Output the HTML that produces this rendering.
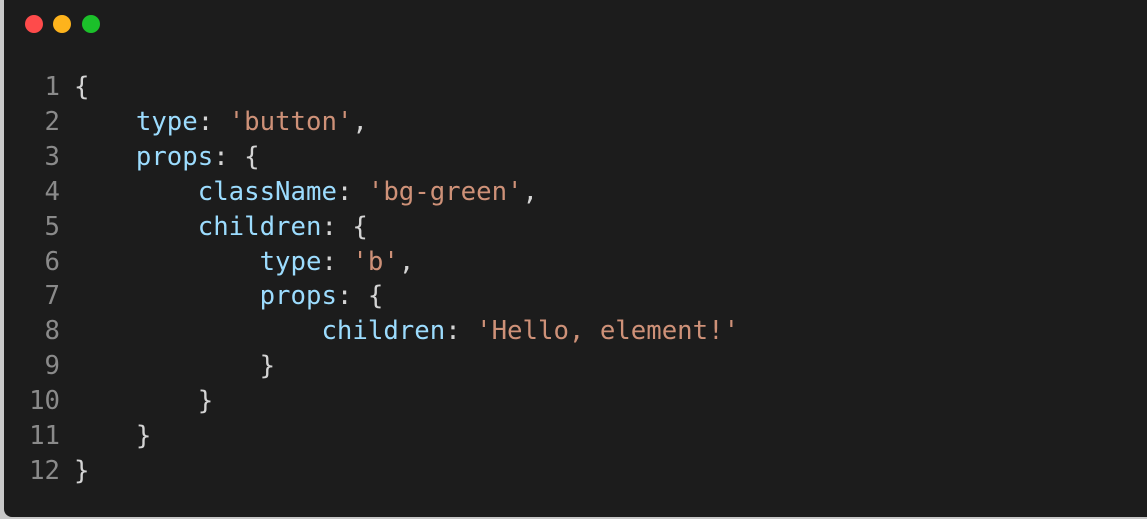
<!DOCTYPE html><html><head><style>
body{margin:0;width:1147px;height:519px;background:#c8c8c8;overflow:hidden;position:relative}
.win{position:absolute;left:4px;top:0;width:1143px;height:517px;background:#1c1c1c;border-bottom-left-radius:8px}
.d{position:absolute;top:15px;width:18px;height:18px;border-radius:50%}
pre{position:absolute;left:0;top:70px;margin:0;font-family:"DejaVu Sans Mono","Liberation Mono",monospace;font-size:25.7px;line-height:34.9px;color:#d4d4d4}
.n{color:#8a8a8a;display:inline-block;width:56px;text-align:right;margin-right:14px}
.k{color:#9cdcfe}.s{color:#ce9178}
</style></head><body><div class="win">
<div class="d" style="left:21px;background:#fe4b4b"></div>
<div class="d" style="left:49px;background:#fdb31c"></div>
<div class="d" style="left:78px;background:#1bc02a"></div>
<pre><span class="n">1</span>{
<span class="n">2</span>    <span class="k">type</span>: <span class="s">'button'</span>,
<span class="n">3</span>    <span class="k">props</span>: {
<span class="n">4</span>        <span class="k">className</span>: <span class="s">'bg-green'</span>,
<span class="n">5</span>        <span class="k">children</span>: {
<span class="n">6</span>            <span class="k">type</span>: <span class="s">'b'</span>,
<span class="n">7</span>            <span class="k">props</span>: {
<span class="n">8</span>                <span class="k">children</span>: <span class="s">'Hello, element!'</span>
<span class="n">9</span>            }
<span class="n">10</span>        }
<span class="n">11</span>    }
<span class="n">12</span>}</pre>
</div></body></html>
